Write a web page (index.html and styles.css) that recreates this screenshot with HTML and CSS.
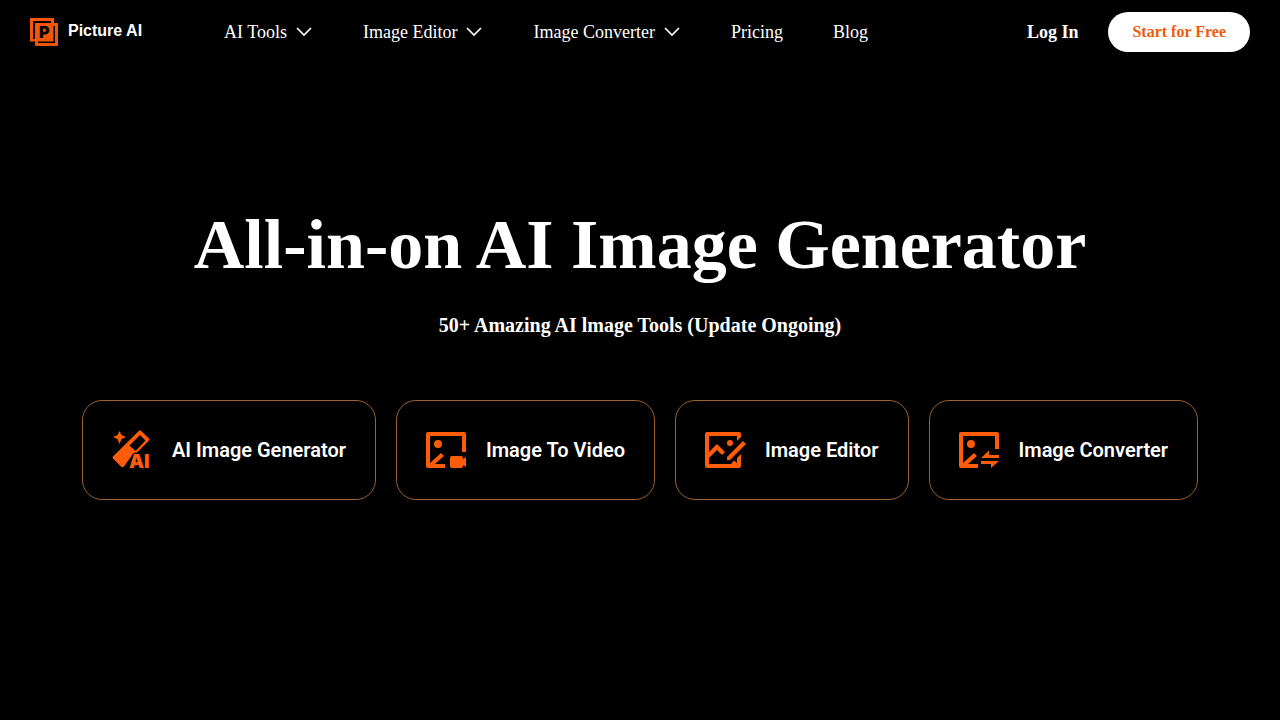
FILE: index.html
```html
<!DOCTYPE html>
<html lang="en">
<head>
  <meta charset="UTF-8" />
  <meta name="viewport" content="width=device-width, initial-scale=1.0" />
  <title>Picture AI</title>
  <link rel="stylesheet" href="styles.css">
</head>
<body>
  <header class="header">
    <a class="logo" href="#">
      <svg width="28" height="28" viewBox="0 0 28 28" aria-hidden="true">
        <defs>
          <linearGradient id="logo-fill" x1="0" y1="0" x2="0" y2="1">
            <stop offset="0" stop-color="#ff5602" />
            <stop offset="1" stop-color="#ea5504" />
          </linearGradient>
        </defs>
        <path fill="url(#logo-fill)" fill-rule="evenodd" d="M0 0H24V5H28V28H5V23.500H0ZM3 3H21V5H5V21H3ZM23.500 8H25V25H8V23.500H23.500Z" />
        <text class="logo-letter" x="9" y="20">P</text>
      </svg>
      <span>Picture AI</span>
    </a>
    <nav class="nav">
      <button class="nav-item" type="button">AI Tools
        <svg class="arrow" width="18" height="18" viewBox="0 0 18 18"><path d="M2 5L9 12L16 5" /></svg>
      </button>
      <button class="nav-item" type="button">Image Editor
        <svg class="arrow" width="18" height="18" viewBox="0 0 18 18"><path d="M2 5L9 12L16 5" /></svg>
      </button>
      <button class="nav-item" type="button">Image Converter
        <svg class="arrow" width="18" height="18" viewBox="0 0 18 18"><path d="M2 5L9 12L16 5" /></svg>
      </button>
      <a class="nav-item" href="#">Pricing</a>
      <a class="nav-item" href="#">Blog</a>
    </nav>
    <div class="account">
      <a class="login" href="#">Log In</a>
      <button class="start" type="button">Start for Free</button>
    </div>
  </header>

  <main class="hero">
    <h1>All-in-on AI Image Generator</h1>
    <p class="subtitle">50+ Amazing AI lmage Tools (Update Ongoing)</p>
    <div class="tools">
      <a class="tool" href="#">
        <svg class="icon" width="40" height="40" viewBox="0 0 40 40" aria-hidden="true">
          <path d="M7.500 1L9.500 5L14 7L9.500 9L7.500 14L5.500 9L1 7L5.500 5Z" />
          <path fill-rule="evenodd" d="M27 .7Q28 0 29 .7L37 8.500Q38 9.500 37 10.500L25 22.500Q21 22 19.500 26L12 36.500Q10.500 38 9 36.500L1 28.500Q0 27.500 1 26.500ZM28 5L17.500 15.500L23.500 21L33.500 10.500Z" />
          <text class="icon-text" x="17" y="38">AI</text>
        </svg>
        <span>AI Image Generator</span>
      </a>
      <a class="tool" href="#">
        <svg class="icon" width="40" height="40" viewBox="0 0 40 40" aria-hidden="true">
          <path d="M2 2H38Q40 2 40 4V22H36V6H4V33L15 23L18 26L9 34H19V38H2Q0 38 0 36V4Q0 2 2 2Z" />
          <circle cx="12" cy="14" r="4" />
          <path d="M26 26H35Q37 26 37 28V29L40 27V37L37 35V36Q37 38 35 38H26Q24 38 24 36V28Q24 26 26 26Z" />
        </svg>
        <span>Image To Video</span>
      </a>
      <a class="tool" href="#">
        <svg class="icon" width="40" height="40" viewBox="0 0 40 40" aria-hidden="true">
          <path d="M2 2H34Q36 2 36 4V7L32 11V6H4V22L12 14L20 22L17 25L12 20L4 28V34H26L29 30.500L32 33V28L36 24V36Q36 38 34 38H2Q0 38 0 36V4Q0 2 2 2Z" />
          <circle cx="25" cy="13" r="3" />
          <path d="M38 11L41 14L25 30H22V27Z" />
        </svg>
        <span>Image Editor</span>
      </a>
      <a class="tool" href="#">
        <svg class="icon" width="40" height="40" viewBox="0 0 40 40" aria-hidden="true">
          <path d="M2 2H38Q40 2 40 4V19H36V6H4V33L15 23L18 26L9 34H19V38H2Q0 38 0 36V4Q0 2 2 2Z" />
          <circle cx="12" cy="14" r="4" />
          <path d="M22 28L30 20.500V25H40V28ZM22 31H40L32 38V34H22Z" />
        </svg>
        <span>Image Converter</span>
      </a>
    </div>
  </main>
</body>
</html>
```
FILE: styles.css
```css
* {
  box-sizing: border-box;
}
body {
  margin: 0;
  background: #000;
  color: #fff;
  font-family: "Liberation Serif", "Times New Roman", serif;
}
a {
  color: inherit;
  text-decoration: none;
}
button {
  border: none;
  padding: 0;
  background: none;
  color: inherit;
  font-family: inherit;
  cursor: pointer;
}
.header {
  display: flex;
  align-items: center;
  height: 64px;
  padding: 0 30px;
}
.logo {
  display: flex;
  gap: 10px;
  font: bold 16px/26px "Liberation Sans", Arial, sans-serif;
}
.logo-letter {
  font: 900 16px Inter, sans-serif;
}
.nav {
  display: flex;
  gap: 50px;
  margin-left: 82px;
}
.nav-item {
  display: flex;
  align-items: center;
  gap: 8px;
  font-size: 18px;
  line-height: 24px;
}
.arrow {
  fill: none;
  stroke: #fff;
  stroke-width: 1.7;
}
.account {
  display: flex;
  align-items: center;
  gap: 30px;
  margin-left: auto;
}
.login {
  font-size: 18px;
  font-weight: bold;
}
.start {
  height: 40px;
  padding: 0 24px;
  border-radius: 20px;
  background: #fff;
  color: #f15a0a;
  font-size: 16px;
  font-weight: bold;
}
.hero {
  padding: 136px 20px 0;
  text-align: center;
}
h1 {
  margin: 0;
  font-size: 70px;
  line-height: 90px;
}
.subtitle {
  margin: 20px 0 60px;
  font-size: 20px;
  font-weight: bold;
  line-height: 30px;
}
.tools {
  display: flex;
  justify-content: center;
  gap: 20px;
}
.tool {
  display: flex;
  align-items: center;
  gap: 20px;
  height: 100px;
  padding: 0 29px;
  border: 1px solid #9b602b;
  border-radius: 20px;
  font: 600 20px/30px Roboto, sans-serif;
}
.icon {
  fill: #ff5c0a;
  overflow: visible;
}
.icon-text {
  font: 900 19px Inter, sans-serif;
}
```
